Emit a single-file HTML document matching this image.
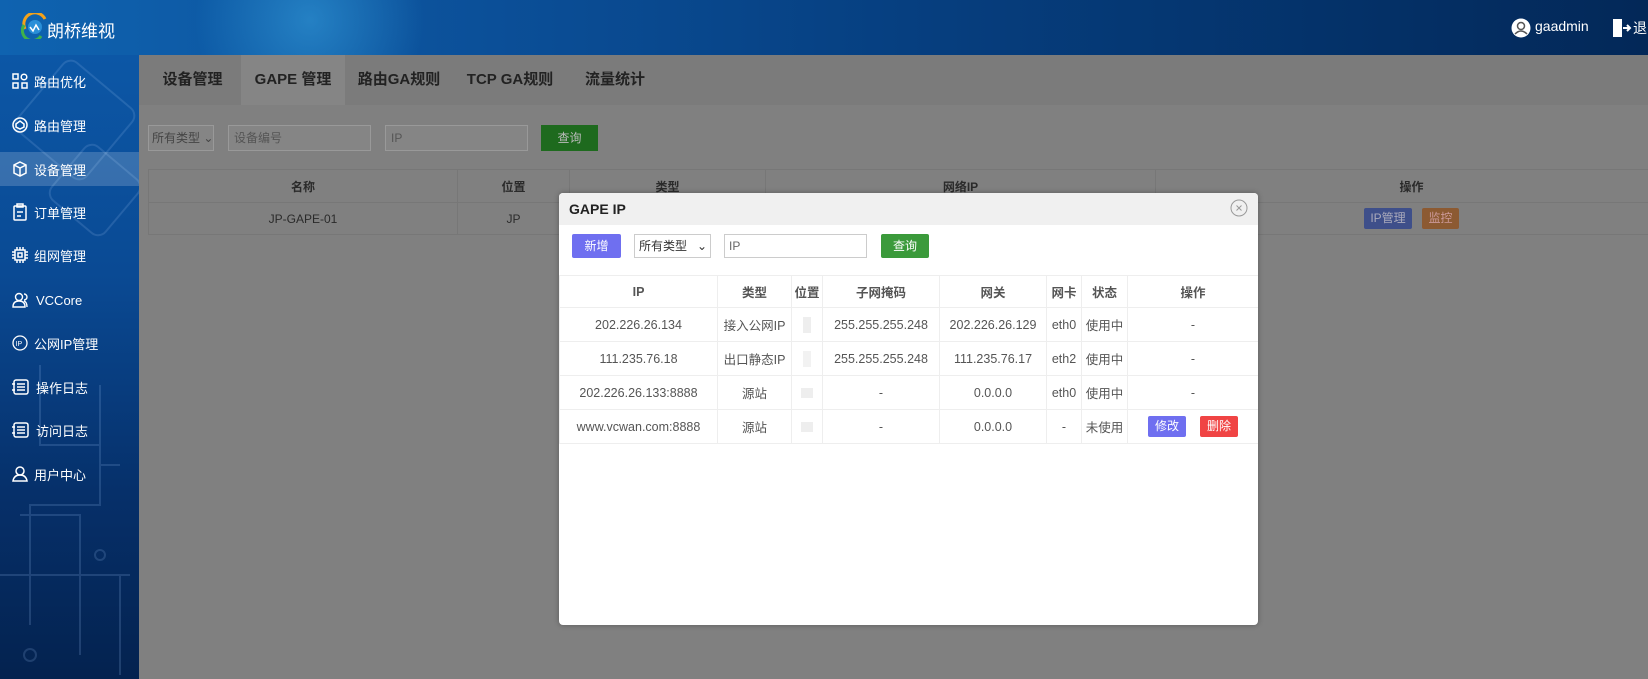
<!DOCTYPE html>
<html><head><meta charset="utf-8"><style>
*{box-sizing:border-box;margin:0;padding:0}
body{width:1648px;height:679px;overflow:hidden;position:relative;font-family:"Liberation Sans","Noto Sans CJK SC",sans-serif;background:#808080}
.hdr{position:absolute;left:0;top:0;width:1648px;height:55px;background:linear-gradient(90deg,#0f63b0 0%,#0b4f98 30%,#063f80 55%,#032858 100%);overflow:hidden}
.hdr .glow{position:absolute;left:180px;top:-80px;width:260px;height:200px;border-radius:50%;background:radial-gradient(circle,rgba(60,170,230,.5),rgba(60,170,230,0) 70%)}
.side{position:absolute;left:0;top:55px;width:139px;height:624px;background:linear-gradient(180deg,#0c57a6 0%,#0a4a94 35%,#06306a 70%,#04224f 100%);overflow:hidden}
.item{position:absolute;left:0;width:139px;height:34px;color:#fff;font-size:13px;display:flex;align-items:center;padding-left:12px;white-space:nowrap}
.item svg{margin-right:6px;flex:none}
.item.act{background:rgba(255,255,255,.18)}
.main{position:absolute;left:139px;top:55px;width:1509px;height:624px;background:#808080}
.tabs{position:absolute;left:0;top:0;width:1509px;height:50px;background:#7b7b7b}
.tab{position:absolute;top:0;height:50px;line-height:50px;font-size:15px;font-weight:bold;color:#222;text-align:center;white-space:nowrap}
.box{position:absolute;border:1px solid #999;background:#858585;font-size:12px;color:#444;line-height:24px;padding-left:5px;white-space:nowrap}
.gt{position:absolute;border-collapse:collapse;font-size:12px;color:#2a2a2a}
.gt td{border:1px solid #777;text-align:center}
.modal{position:absolute;left:559px;top:193px;width:699px;height:432px;background:#fff;border-radius:4px;box-shadow:0 0 6px rgba(0,0,0,.3);overflow:hidden}
.mh{height:32px;background:#f0f0f0;font-weight:bold;font-size:14px;line-height:32px;padding-left:10px;color:#222}
.mt{position:absolute;left:0;top:82px;border-collapse:collapse;font-size:12.5px;color:#555;table-layout:fixed}
.mt td{border:1px solid #eee;text-align:center;height:34px;padding:0;white-space:nowrap;vertical-align:middle}
.mt tr:first-child td{height:32px;font-weight:bold;color:#555}
.btn{display:inline-block;color:#fff;font-size:12px;border-radius:2px;text-align:center;vertical-align:middle;white-space:nowrap}
.blur{display:inline-block;vertical-align:middle}
</style></head><body>
<div class="hdr"><div class="glow"></div>
<svg style="position:absolute;left:21px;top:13px" width="28" height="26" viewBox="0 0 28 26"><path d="M4 16 A10 10 0 0 1 24 6" stroke="#f3a21b" stroke-width="3" fill="none"/><path d="M3 12 A10 10 0 0 0 20 23" stroke="#3fb24a" stroke-width="3" fill="none"/><circle cx="14" cy="14" r="7" fill="#2a8fd8"/><path d="M9 14 l3 4 3-6 3 5" stroke="#fff" stroke-width="1.5" fill="none"/></svg>
<div style="position:absolute;left:47px;top:17px;color:#fff;font-size:17px">朗桥维视</div>
<svg style="position:absolute;left:1511px;top:18px" width="20" height="20" viewBox="0 0 20 20"><circle cx="10" cy="10" r="9.5" fill="#fff"/><circle cx="10" cy="8" r="3.5" fill="none" stroke="#555" stroke-width="1.5"/><path d="M4 16 q6 -6 12 0" fill="none" stroke="#555" stroke-width="1.5"/></svg>
<div style="position:absolute;left:1535px;top:18px;color:#fff;font-size:14px;white-space:nowrap">gaadmin</div>
<svg style="position:absolute;left:1612px;top:18px" width="20" height="20" viewBox="0 0 20 20"><rect x="1" y="1" width="9" height="18" fill="#fff"/><path d="M11 10 h7 M15 7 l3 3 -3 3" stroke="#fff" stroke-width="2" fill="none"/></svg>
<div style="position:absolute;left:1633px;top:18px;color:#fff;font-size:14px;white-space:nowrap">退出</div>
</div>
<div class="side">
<svg style="position:absolute;left:0;top:0" width="139" height="624" fill="none" stroke="rgba(140,180,230,.2)" stroke-width="2"><rect x="30" y="20" width="90" height="90" rx="10" transform="rotate(40 75 65)"/><rect x="60" y="100" width="70" height="70" rx="10" transform="rotate(40 95 135)"/><path d="M40 310 v80 h60 v60 h-70 v120 M100 330 v80 h20 M20 460 h60 v140 M120 520 v100 M0 520 h130"/><circle cx="30" cy="600" r="6"/><circle cx="100" cy="500" r="5"/></svg>
<div class="item" style="top:9px"><svg width="16" height="16" viewBox="0 0 16 16" fill="none" stroke="#fff" stroke-width="1.5"><rect x="1" y="1" width="5" height="5"/><circle cx="12" cy="4" r="2.8"/><rect x="1" y="10" width="5" height="5"/><rect x="10" y="10" width="5" height="5"/></svg>路由优化</div>
<div class="item" style="top:53px"><svg width="16" height="16" viewBox="0 0 16 16" fill="none" stroke="#fff" stroke-width="1.5"><circle cx="8" cy="8" r="7"/><path d="M4 7 l4-3 4 3 v3 l-4 2 -4-2z"/></svg>路由管理</div>
<div class="item act" style="top:97px"><svg width="16" height="16" viewBox="0 0 16 16" fill="none" stroke="#fff" stroke-width="1.5"><path d="M8 1 l6 3 v8 l-6 3 -6-3 v-8z M2 4 l6 3 6-3 M8 7 v8"/></svg>设备管理</div>
<div class="item" style="top:140px"><svg width="16" height="18" viewBox="0 0 16 18" fill="none" stroke="#fff" stroke-width="1.5"><rect x="2" y="3" width="12" height="14" rx="1"/><rect x="5" y="1" width="6" height="3"/><path d="M5 9h6M5 13h4"/></svg>订单管理</div>
<div class="item" style="top:183px"><svg width="16" height="16" viewBox="0 0 16 16" fill="none" stroke="#fff" stroke-width="1.5"><rect x="3" y="3" width="10" height="10"/><rect x="6" y="6" width="4" height="4"/><path d="M0 5h3M0 8h3M0 11h3M13 5h3M13 8h3M13 11h3M5 0v3M8 0v3M11 0v3M5 13v3M8 13v3M11 13v3"/></svg>组网管理</div>
<div class="item" style="top:228px"><svg width="18" height="16" viewBox="0 0 18 16" fill="none" stroke="#fff" stroke-width="1.4"><circle cx="7" cy="5" r="3.5"/><path d="M1 15 q0-6 6-6 q6 0 6 6z M12 2 a3 3 0 0 1 0 6 M15 15 q0-5 -3-6"/></svg>VCCore</div>
<div class="item" style="top:271px"><svg width="16" height="16" viewBox="0 0 16 16" fill="none" stroke="#fff" stroke-width="1.3"><circle cx="8" cy="8" r="7"/><text x="3.6" y="10.8" fill="#fff" stroke="none" font-size="7" font-family="Liberation Sans">IP</text></svg>公网IP管理</div>
<div class="item" style="top:315px"><svg width="18" height="16" viewBox="0 0 18 16" fill="none" stroke="#fff" stroke-width="1.5"><rect x="2" y="1" width="14" height="14" rx="2"/><path d="M5 5h8M5 8h8M5 11h8M0 5h3M0 11h3"/></svg>操作日志</div>
<div class="item" style="top:358px"><svg width="18" height="16" viewBox="0 0 18 16" fill="none" stroke="#fff" stroke-width="1.5"><rect x="2" y="1" width="14" height="14" rx="2"/><path d="M5 5h8M5 8h8M5 11h8M0 5h3M0 11h3"/></svg>访问日志</div>
<div class="item" style="top:402px"><svg width="16" height="16" viewBox="0 0 16 16" fill="none" stroke="#fff" stroke-width="1.5"><circle cx="8" cy="5" r="4"/><path d="M1 15 q1-6 7-6 q6 0 7 6z"/></svg>用户中心</div>
</div>
<div class="main">
<div class="tabs">
<div class="tab" style="left:5px;width:97px">设备管理</div>
<div class="tab" style="left:102px;width:104px;background:#858585">GAPE 管理</div>
<div class="tab" style="left:206px;width:108px">路由GA规则</div>
<div class="tab" style="left:314px;width:114px">TCP GA规则</div>
<div class="tab" style="left:428px;width:96px">流量统计</div>
</div>
<div class="box" style="left:9px;top:70px;width:66px;height:26px;padding-left:3px">所有类型 ⌄</div>
<div class="box" style="left:89px;top:70px;width:143px;height:26px;color:#555">设备编号</div>
<div class="box" style="left:246px;top:70px;width:143px;height:26px;color:#555">IP</div>
<div class="box" style="left:402px;top:70px;width:57px;height:26px;background:#1e6a1e;border-color:#1e6a1e;color:#bbb;padding:0;text-align:center">查询</div>
<table class="gt" style="left:9px;top:114px;width:1520px">
<tr style="height:33px;font-weight:bold"><td style="width:309px">名称</td><td style="width:112px">位置</td><td style="width:196px">类型</td><td style="width:390px">网络IP</td><td>操作</td></tr>
<tr style="height:32px"><td>JP-GAPE-01</td><td>JP</td><td></td><td></td><td><span class="btn" style="width:48px;height:21px;line-height:21px;background:#3e4f8a;color:#aab">IP管理</span>&nbsp;&nbsp;&nbsp;<span class="btn" style="width:37px;height:21px;line-height:21px;background:#8c5a32;color:#c99">监控</span></td></tr>
</table>
</div>
<div class="modal">
<div class="mh">GAPE IP</div>
<svg style="position:absolute;left:671px;top:6px" width="18" height="18" viewBox="0 0 18 18" fill="none" stroke="#999" stroke-width="1"><circle cx="9" cy="9" r="8"/><path d="M6.5 6.5l5 5M11.5 6.5l-5 5"/></svg>
<div class="btn" style="position:absolute;left:13px;top:41px;width:49px;height:24px;line-height:24px;background:#6f6ff0">新增</div>
<div style="position:absolute;left:75px;top:41px;width:77px;height:24px;border:1px solid #ccc;font-size:12px;line-height:22px;padding-left:4px;color:#333;white-space:nowrap">所有类型 &nbsp;&nbsp;⌄</div>
<div style="position:absolute;left:165px;top:41px;width:143px;height:24px;border:1px solid #ccc;font-size:12px;line-height:22px;padding-left:4px;color:#666">IP</div>
<div class="btn" style="position:absolute;left:322px;top:41px;width:48px;height:24px;line-height:24px;background:#3b9a3b">查询</div>
<table class="mt" style="width:699px">
<colgroup><col style="width:158px"><col style="width:74px"><col style="width:31px"><col style="width:117px"><col style="width:107px"><col style="width:35px"><col style="width:46px"><col style="width:131px"></colgroup>
<tr><td>IP</td><td>类型</td><td>位置</td><td>子网掩码</td><td>网关</td><td>网卡</td><td>状态</td><td>操作</td></tr>
<tr><td>202.226.26.134</td><td>接入公网IP</td><td><span class="blur" style="width:8px;height:16px;background:#eee"></span></td><td>255.255.255.248</td><td>202.226.26.129</td><td>eth0</td><td>使用中</td><td>-</td></tr>
<tr><td>111.235.76.18</td><td>出口静态IP</td><td><span class="blur" style="width:8px;height:16px;background:#f2f2f2"></span></td><td>255.255.255.248</td><td>111.235.76.17</td><td>eth2</td><td>使用中</td><td>-</td></tr>
<tr><td>202.226.26.133:8888</td><td>源站</td><td><span class="blur" style="width:12px;height:10px;background:#eee"></span></td><td>-</td><td>0.0.0.0</td><td>eth0</td><td>使用中</td><td>-</td></tr>
<tr><td>www.vcwan.com:8888</td><td>源站</td><td><span class="blur" style="width:12px;height:10px;background:#eee"></span></td><td>-</td><td>0.0.0.0</td><td>-</td><td>未使用</td><td><span class="btn" style="width:38px;height:21px;line-height:21px;background:#6f6ff0">修改</span>&nbsp;&nbsp;&nbsp;&nbsp;<span class="btn" style="width:38px;height:21px;line-height:21px;background:#f04444">删除</span></td></tr>
</table>
</div>
</body></html>
